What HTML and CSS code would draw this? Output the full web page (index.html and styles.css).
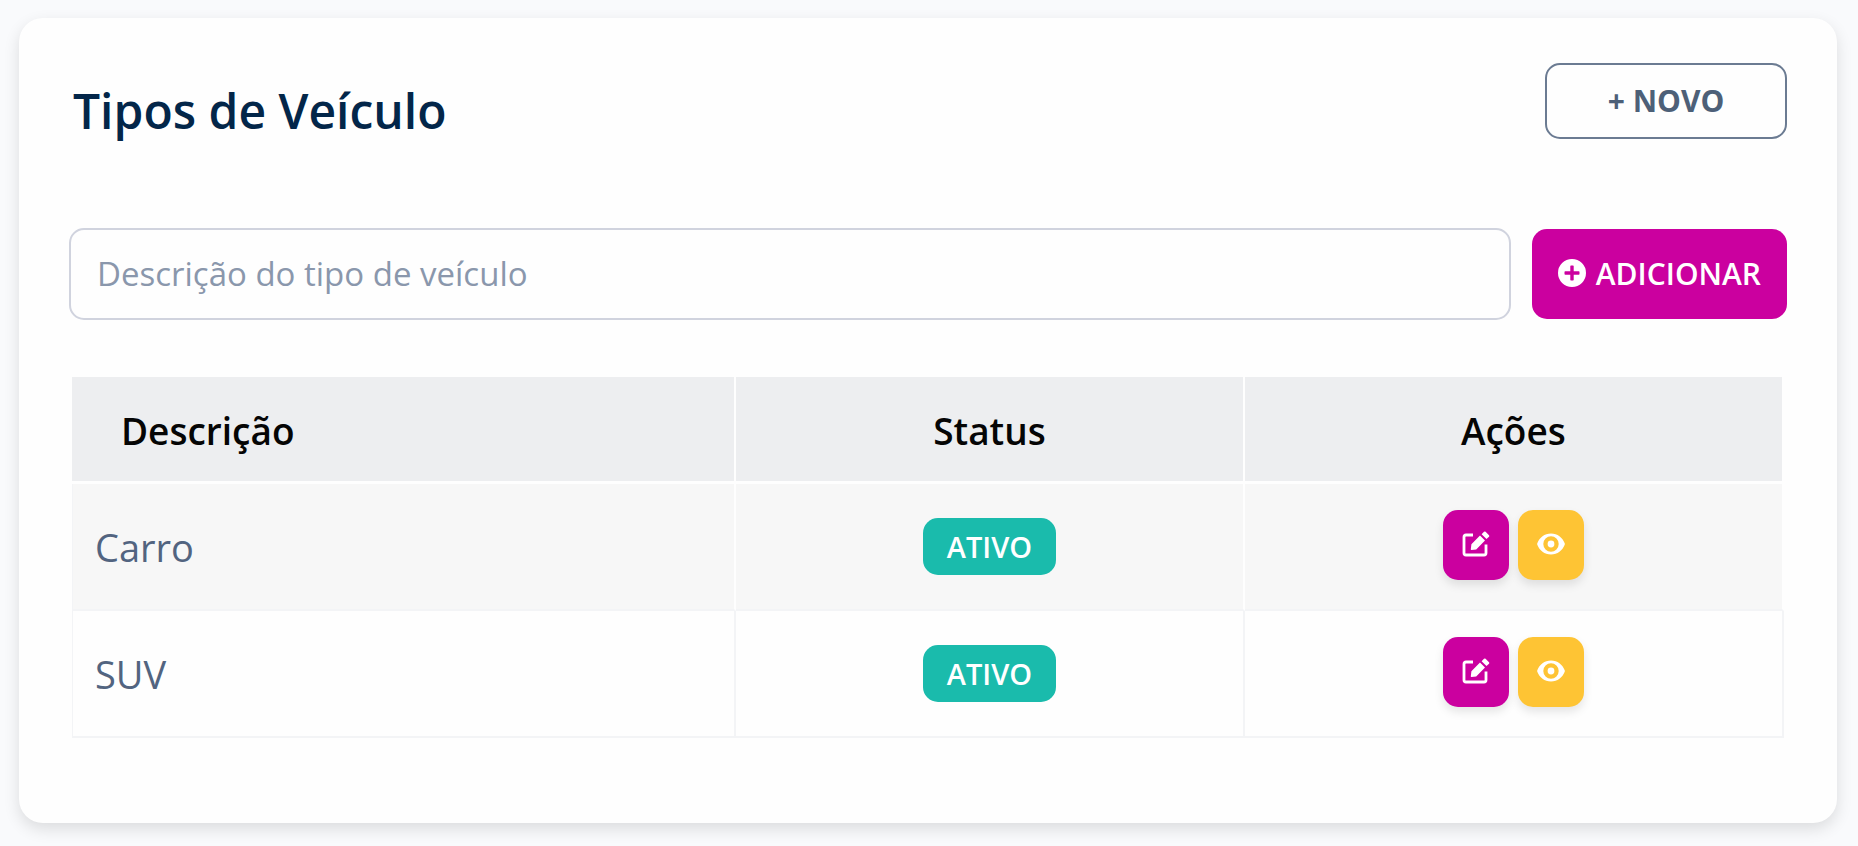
FILE: index.html
```html
<!DOCTYPE html>
<html lang="pt-BR">

<head>
    <meta charset="utf-8">
    <title>Tipos de Veículo</title>
    <meta name="viewport" content="width=device-width, initial-scale=1">
    <link rel="stylesheet" href="styles.css">
</head>

<body>
    <svg class="sprite" aria-hidden="true">
        <symbol id="icon-plus" viewBox="0 0 28 28">
            <path fill-rule="evenodd" d="M14 0a14 14 0 1 0 0 28a14 14 0 0 0 0-28zM12.3 7.2q0-.7.7-.7h2q.7 0 .7.7v5.1h5.1q.7 0 .7.7v2q0 .7-.7.7h-5.1v5.1q0 .7-.7.7h-2q-.7 0-.7-.7v-5.1H7.2q-.7 0-.7-.7v-2q0-.7.7-.7h5.1z"/>
        </symbol>
        <symbol id="icon-edit" viewBox="0 0 28 28">
            <path d="M11 5H4Q2 5 2 7V23Q2 25 4 25H22Q24 25 24 23V14.5" fill="none" stroke="currentColor" stroke-width="2.8"/>
            <path d="M9.4 14.2L18 5.6L23 10.6L14.2 19.4L9.4 20Q8.7 20 8.8 19.2z"/>
            <path d="M19.6 4.2L22 1.8Q22.8 1 23.6 1.8L27 5.2Q27.7 6 27 6.7L24.5 9.1z"/>
        </symbol>
        <symbol id="icon-eye" viewBox="0 0 28 28">
            <path fill-rule="evenodd" d="M14 3.5C7.5 3.5 2.5 7.5.3 13.2q-.3.8 0 1.6C2.5 20.5 7.5 24.5 14 24.5s11.5-4 13.7-9.7q.3-.8 0-1.6C25.5 7.5 20.5 3.5 14 3.5zM14 6.3a7.7 7.7 0 1 1 0 15.4a7.7 7.7 0 0 1 0-15.4z"/>
            <circle cx="14" cy="14" r="3.4"/>
        </symbol>
    </svg>

    <main class="card">
        <header class="card-header">
            <h1>Tipos de Veículo</h1>
            <button type="button" class="btn btn-outline">+ NOVO</button>
        </header>

        <form class="add-form">
            <input type="text" id="descricao" name="descricao" class="form-control" placeholder="Descrição do tipo de veículo" aria-label="Descrição do tipo de veículo">
            <button type="button" class="btn btn-primary">
                <svg class="icon-add" aria-hidden="true"><use href="#icon-plus"/></svg>
                ADICIONAR
            </button>
        </form>

        <table class="table">
            <colgroup>
                <col class="col-descricao">
                <col class="col-status">
                <col>
            </colgroup>
            <thead>
                <tr>
                    <th scope="col">Descrição</th>
                    <th scope="col">Status</th>
                    <th scope="col">Ações</th>
                </tr>
            </thead>
            <tbody>
                <tr>
                    <td>Carro</td>
                    <td><span class="badge">ATIVO</span></td>
                    <td>
                        <div class="actions">
                            <button type="button" class="btn-icon btn-edit" aria-label="Editar"><svg><use href="#icon-edit"/></svg></button>
                            <button type="button" class="btn-icon btn-view" aria-label="Visualizar"><svg><use href="#icon-eye"/></svg></button>
                        </div>
                    </td>
                </tr>
                <tr>
                    <td>SUV</td>
                    <td><span class="badge">ATIVO</span></td>
                    <td>
                        <div class="actions">
                            <button type="button" class="btn-icon btn-edit" aria-label="Editar"><svg><use href="#icon-edit"/></svg></button>
                            <button type="button" class="btn-icon btn-view" aria-label="Visualizar"><svg><use href="#icon-eye"/></svg></button>
                        </div>
                    </td>
                </tr>
            </tbody>
        </table>
    </main>
</body>

</html>
```
FILE: styles.css
```css
* {
    box-sizing: border-box;
}

body {
    margin: 0;
    padding: 18px 21px 22px 19px;
    background-color: #f9fafc;
    font-family: 'Open Sans', sans-serif;
    color: #526480;
}

.sprite {
    display: none;
}

.card {
    padding: 45px 50px 85px;
    background-color: #fefefe;
    border-radius: 24px;
    box-shadow: 0 6px 16px rgba(0, 0, 0, 0.12);
}

.card-header {
    display: flex;
    justify-content: space-between;
    align-items: flex-start;
    margin-bottom: 83px;
}

h1 {
    margin: 0;
    padding: 14px 4px 0;
    font-size: 48px;
    font-weight: 600;
    line-height: 68px;
    color: #032649;
}

.btn {
    display: flex;
    align-items: center;
    justify-content: center;
    gap: 10px;
    border: none;
    border-radius: 15px;
    font-family: inherit;
    font-size: 30px;
    font-weight: 600;
    cursor: pointer;
}

.btn-outline {
    width: 242px;
    height: 76px;
    padding: 0 0 2px;
    border: 2px solid #6b7b92;
    background-color: transparent;
    font-weight: 700;
    color: #4d6078;
}

.btn-primary {
    padding: 0 26px 2px;
    margin: 1px 0;
    background-color: #cb009f;
    color: #fff;
}

.icon-add {
    width: 28px;
    height: 28px;
    fill: currentColor;
}

.add-form {
    display: flex;
    gap: 21px;
    margin-bottom: 57px;
}

.form-control {
    flex: 1;
    min-width: 0;
    height: 92px;
    padding: 0 26px 2px;
    border: 2px solid #d0d3de;
    border-radius: 15px;
    background-color: transparent;
    font-family: inherit;
    font-size: 33px;
    color: #526480;
}

.form-control::placeholder {
    color: #8a97ac;
    opacity: 1;
}

.table {
    width: calc(100% - 6px);
    margin-left: 3px;
    table-layout: fixed;
    border-collapse: separate;
    border-spacing: 0;
}

/* the last column takes what is left */
.col-descricao {
    width: 38.8%;
}

.col-status {
    width: 29.7%;
}

th {
    height: 107px;
    padding: 2px 20px 0;
    border-right: 2px solid #fefefe;
    border-bottom: 3px solid #fefefe;
    background-color: #edeef0;
    background-clip: padding-box;
    font-size: 37px;
    font-weight: 600;
    color: #050505;
}

th:first-child {
    padding-left: 49px;
    text-align: left;
}

td {
    height: 127px;
    padding: 0 22px;
    border-right: 2px solid #f3f4f6;
    border-bottom: 2px solid #f3f4f6;
    font-size: 38px;
    text-align: center;
}

td:first-child {
    border-left: 1px solid #f3f4f6;
    text-align: left;
}

tbody tr:nth-child(odd) td {
    background-color: #f7f7f7;
    border-right-color: #fefefe;
}

.badge {
    display: block;
    width: fit-content;
    margin: 0 auto;
    padding: 0 24px;
    border-radius: 15px;
    background-color: #1abbac;
    font-size: 29px;
    font-weight: 600;
    line-height: 57px;
    color: #fff;
}

.actions {
    display: flex;
    justify-content: center;
    gap: 9px;
    padding-bottom: 3px;
}

.btn-icon {
    display: flex;
    align-items: center;
    justify-content: center;
    width: 66px;
    height: 70px;
    padding: 0 0 2px;
    border: none;
    border-radius: 15px;
    box-shadow: 0 5px 10px rgba(0, 0, 0, 0.1);
    color: #fff;
    cursor: pointer;
}

.btn-icon svg {
    width: 28px;
    height: 28px;
    fill: currentColor;
}

.btn-edit {
    background-color: #cb009f;
}

.btn-view {
    background-color: #fec434;
}
```
